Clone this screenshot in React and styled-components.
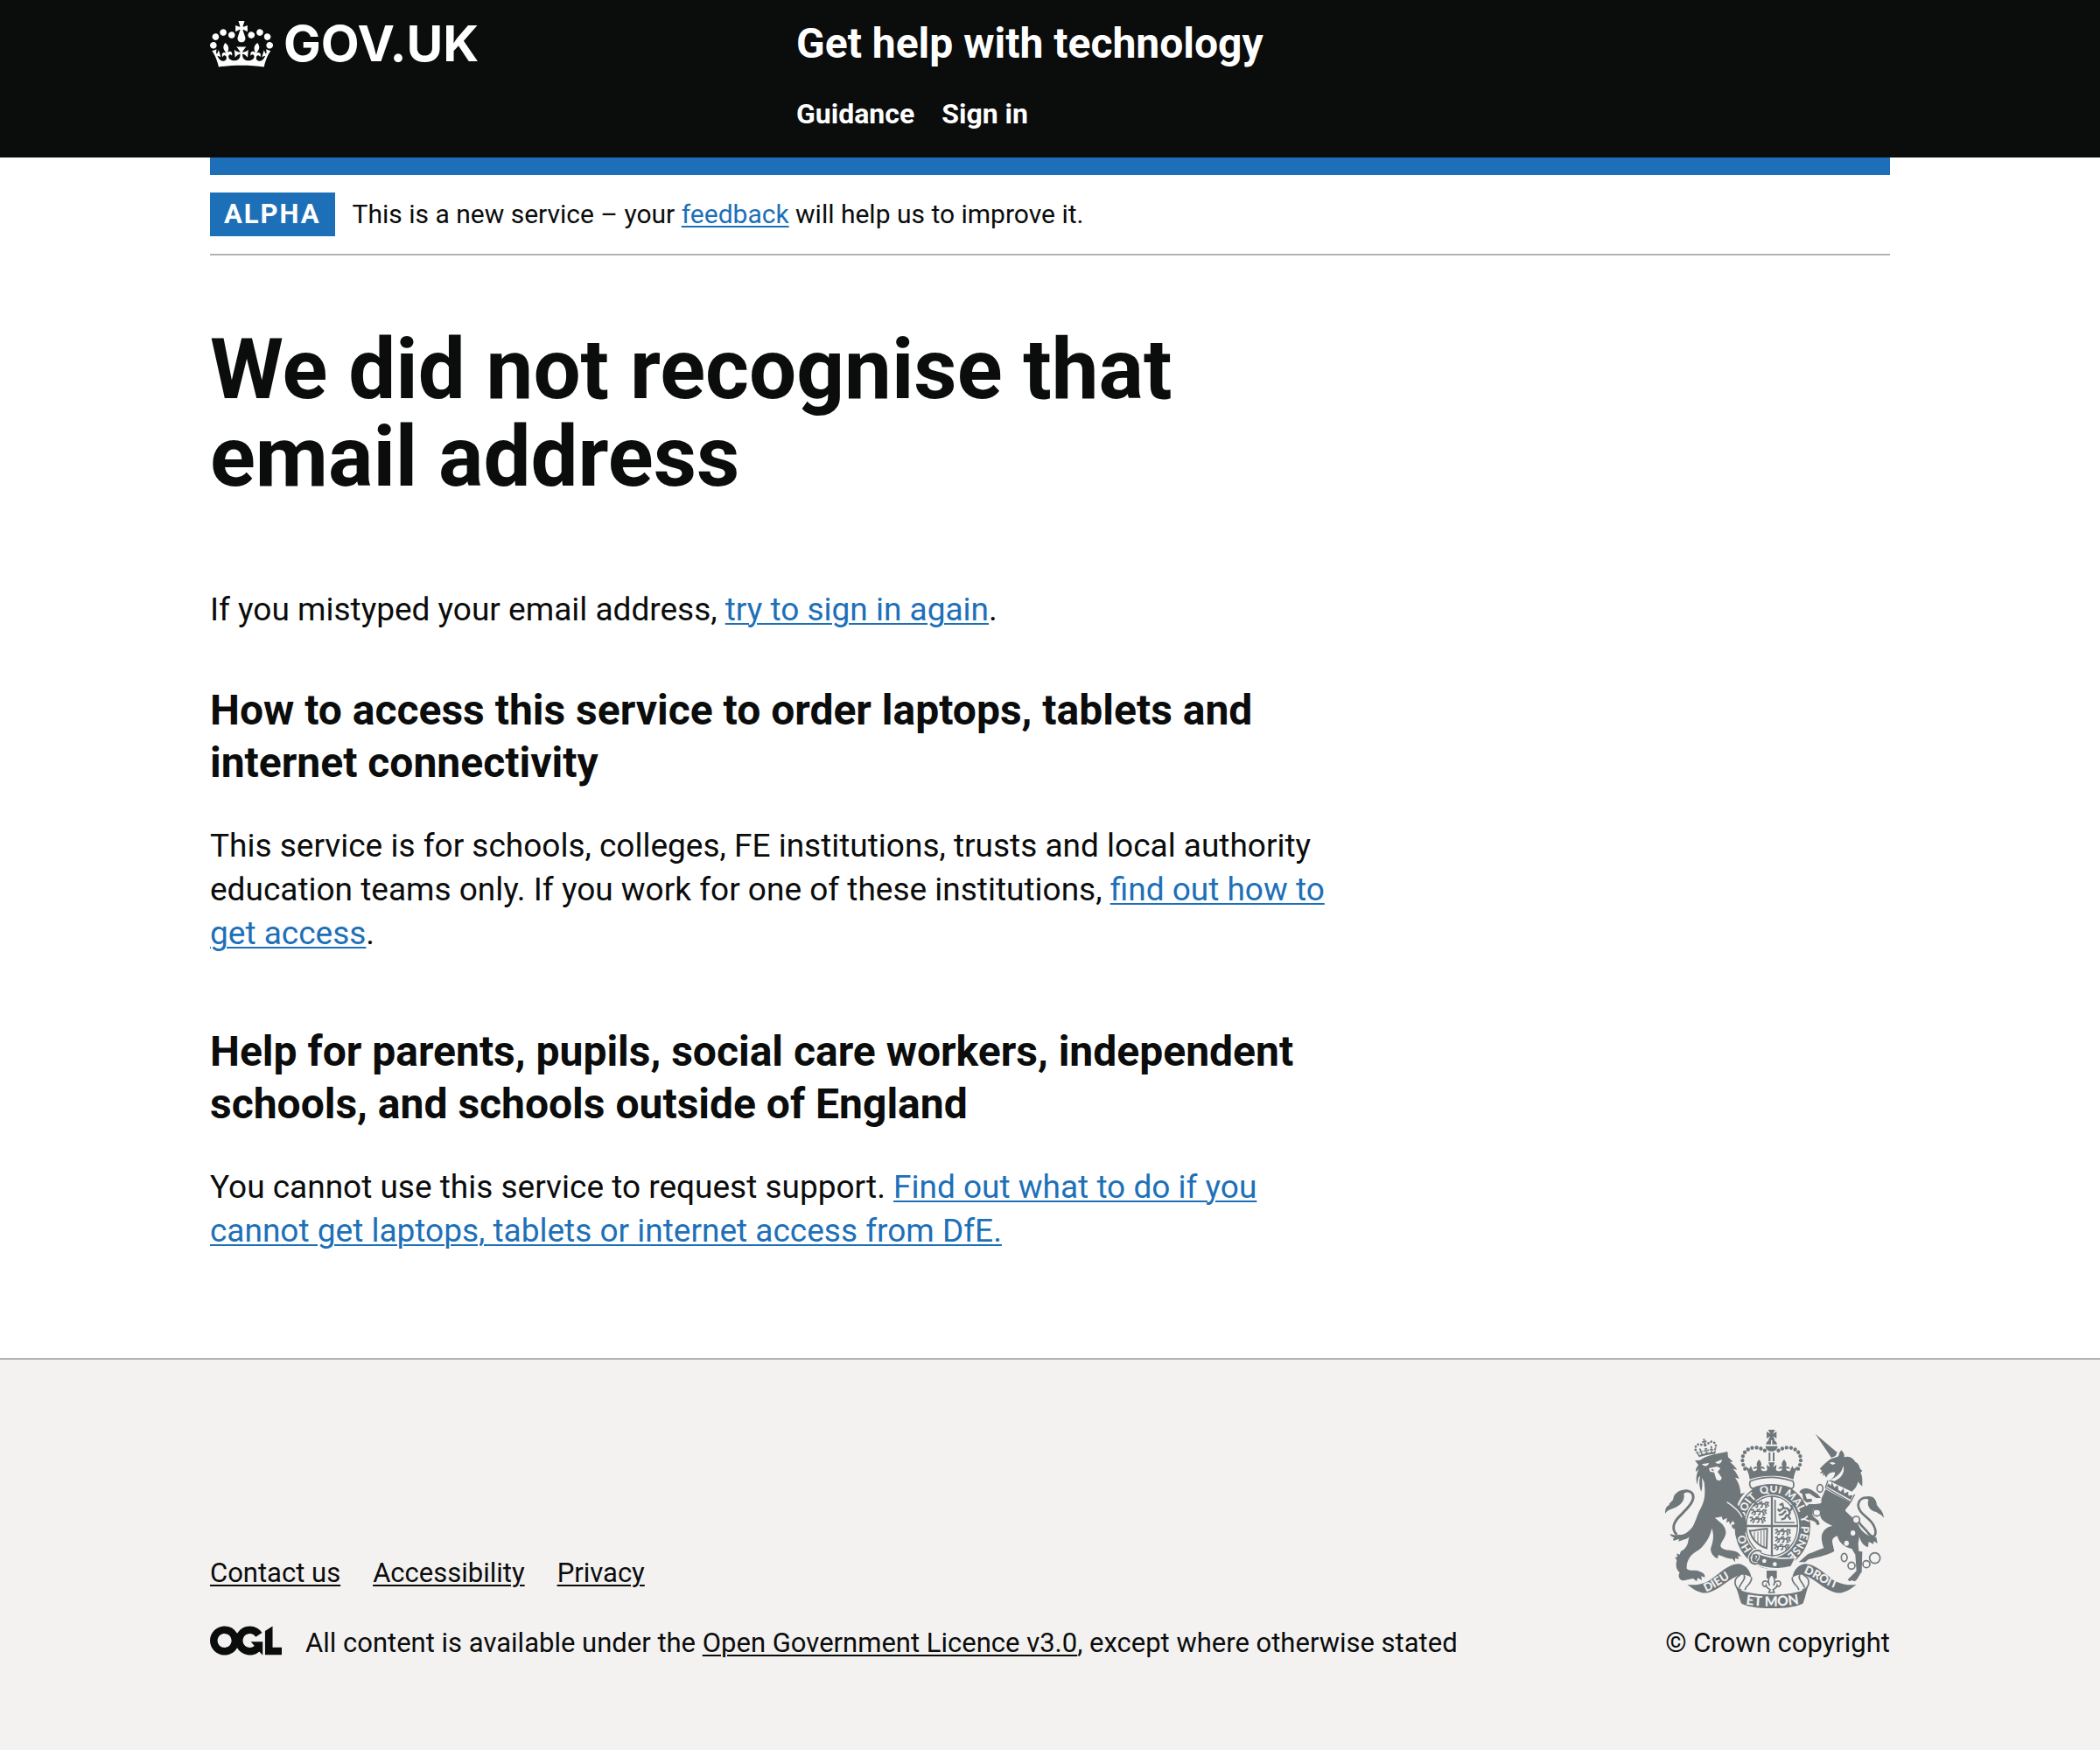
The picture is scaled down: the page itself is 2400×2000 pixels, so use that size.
import React from "react";
import styled, { createGlobalStyle } from "styled-components";

const ink = "#0b0c0c";
const blue = "#1d70b8";
const rule = "#b1b4b6";
const pale = "#f3f2f1";
const stone = "#6f777b";

const GlobalStyle = createGlobalStyle`
  html {
    background: ${pale};
  }
  body {
    margin: 0;
    background: #fff;
    color: ${ink};
    font-family: Roboto, "Liberation Sans", sans-serif;
  }
  *, *::before, *::after {
    box-sizing: border-box;
  }
`;

const Container = styled.div`
  width: calc(100% - 120px);
  max-width: 1920px;
  margin: 0 auto;
`;

const Header = styled.header`
  background: ${ink};
  color: #fff;
`;

const HeaderGrid = styled(Container)`
  display: grid;
  grid-template-columns: 1fr 2fr;
  column-gap: 45px;
  align-items: start;
  padding: 20px 0 30px;
`;

const HeaderLink = styled.a`
  color: #fff;
  text-decoration: none;
`;

const LogoLink = styled(HeaderLink)`
  display: inline-flex;
  align-items: center;
  gap: 12px;
  font: bold 57px/60px Inter, "Liberation Sans", sans-serif;
`;

const CrownIcon = styled.svg`
  display: block;
  width: 72px;
  height: 53px;
  fill: currentColor;
`;

const ServiceName = styled(HeaderLink)`
  display: inline-block;
  font-size: 48px;
  line-height: 60px;
  font-weight: 700;
`;

const NavList = styled.ul`
  display: flex;
  gap: 31px;
  margin: 30px 0 0;
  padding: 0;
  list-style: none;
  font-size: 32px;
  line-height: 40px;
  font-weight: 700;
`;

const BlueBar = styled(Container)`
  height: 20px;
  background: ${blue};
`;

const PhaseBanner = styled(Container)`
  display: flex;
  gap: 20px;
  padding: 20px 0;
  border-bottom: 2px solid ${rule};
  font-size: 30px;
  line-height: 50px;
`;

const Tag = styled.strong`
  padding: 0 16px;
  background: ${blue};
  color: #fff;
  font-size: 31px;
  letter-spacing: 2px;
`;

const Link = styled.a`
  color: ${(p) => (p.$plain ? ink : blue)};
  text-decoration: underline;
  text-decoration-thickness: 2px;
  text-underline-offset: 3px;
`;

const Main = styled(Container).attrs({ as: "main" })`
  display: grid;
  grid-template-columns: 2fr 1fr;
  padding: 80px 0 120px;
`;

const Title = styled.h1`
  margin: 0 0 100px;
  font-size: 96px;
  line-height: 100px;
  font-weight: 700;
`;

const Subtitle = styled.h2`
  margin: ${(p) => p.$gap}px 0 40px;
  font-size: 48px;
  line-height: 60px;
  font-weight: 700;
`;

const Text = styled.p`
  margin: 0;
  font-size: 37px;
  line-height: 50px;
`;

const Footer = styled.footer`
  border-top: 2px solid ${rule};
  background: ${pale};
  font-size: 31px;
  line-height: 40px;
`;

const FooterRow = styled(Container)`
  display: flex;
  align-items: flex-end;
  justify-content: space-between;
  gap: 60px;
  padding: 80px 0 50px;
`;

const FooterLinks = styled.ul`
  display: flex;
  gap: 37px;
  margin: 0 0 40px;
  padding: 0;
  list-style: none;
`;

const Licence = styled.div`
  display: flex;
  align-items: flex-start;
  gap: 27px;
`;

const OglIcon = styled.svg`
  display: block;
  flex: none;
  width: 82px;
  height: 34px;
  fill: ${ink};
`;

const Copyright = styled(Link)`
  display: flex;
  flex-direction: column;
  align-items: flex-start;
  gap: 20px;
  white-space: nowrap;
  text-decoration: none;
`;

const ArmsIcon = styled.svg`
  display: block;
  width: 250px;
  height: 204px;
`;

const crownPath =
  "M25 30.2c3.5 1.5 7.7-.2 9.1-3.7 1.5-3.6-.2-7.8-3.9-9.2-3.6-1.4-7.6.3-9.1 3.9-1.4 3.5.3 7.5 3.9 9zM9 39.5c3.6 1.5 7.8-.2 9.2-3.7 1.5-3.6-.2-7.8-3.9-9.1-3.6-1.5-7.6.2-9.1 3.8-1.4 3.5.3 7.5 3.8 9zM4.4 57.2c3.5 1.5 7.7-.2 9.1-3.8 1.5-3.6-.2-7.7-3.9-9.1-3.5-1.5-7.6.3-9.1 3.8-1.4 3.5.3 7.6 3.9 9.1zm38.3-21.4c3.5 1.5 7.7-.2 9.1-3.8 1.5-3.6-.2-7.7-3.9-9.1-3.6-1.5-7.6.3-9.1 3.8-1.3 3.6.4 7.7 3.9 9.1zm64.4-5.6c-3.6 1.5-7.8-.2-9.1-3.7-1.5-3.6.2-7.8 3.8-9.2 3.6-1.4 7.7.3 9.2 3.9 1.3 3.5-.4 7.5-3.9 9zm15.9 9.3c-3.6 1.5-7.7-.2-9.1-3.7-1.5-3.6.2-7.8 3.7-9.1 3.6-1.5 7.7.2 9.2 3.8 1.5 3.5-.3 7.5-3.8 9zm4.7 17.7c-3.6 1.5-7.8-.2-9.2-3.8-1.5-3.6.2-7.7 3.9-9.1 3.6-1.5 7.7.3 9.2 3.8 1.3 3.5-.4 7.6-3.9 9.1zM89.3 35.8c-3.6 1.5-7.8-.2-9.2-3.8-1.4-3.6.2-7.7 3.9-9.1 3.6-1.5 7.7.3 9.2 3.8 1.4 3.6-.3 7.7-3.9 9.1zM69.7 17.7l8.9 4.7V9.3l-8.9 2.8c-.2-.3-.5-.6-.9-.9L72.4 0H59.6l3.5 11.2c-.3.3-.6.5-.9.9l-8.8-2.8v13.1l8.8-4.7c.3.3.6.7.9.9l-5 15.4v.1c-.2.8-.4 1.6-.4 2.4 0 4.1 3.1 7.5 7 8.1h.2c.3 0 .7.1 1 .1.4 0 .7 0 1-.1h.2c4-.6 7.1-4.1 7.1-8.1 0-.8-.1-1.7-.4-2.4V34l-5.1-15.4c.4-.2.7-.6 1-.9zM66 92.8c16.9 0 32.8 1.1 47.1 3.2 4-16.9 8.9-26.7 14-33.5l-9.6-3.4c1 4.9 1.1 7.2 0 10.2-1.5-1.4-3-4.3-4.2-8.7L108.6 76c2.8-2 5-3.2 7.5-3.3-4.4 9.4-10 11.9-13.6 11.2-4.3-.8-6.3-4.6-5.6-7.9 1-4.7 5.7-5.9 8-.5 4.3-8.7-3-11.4-7.6-8.8 7.1-7.2 7.9-13.5 2.1-21.1-8 6.1-8.1 12.3-4.5 20.8-4.7-5.4-12.1-2.5-9.5 6.2 3.4-5.2 7.9-2 7.2 3.1-.6 4.3-6.4 7.8-13.5 7.2-10.3-.9-10.9-8-11.2-13.8 2.5-.5 7.1 1.8 11 7.3L80.2 60c-4.1 4.4-8 5.3-12.3 5.4 1.4-4.4 8-11.6 8-11.6H55.5s6.4 7.2 7.9 11.6c-4.2-.1-8-1-12.3-5.4l1.4 16.4c3.9-5.5 8.5-7.7 10.9-7.3-.3 5.8-.9 12.8-11.1 13.8-7.2.6-12.9-2.9-13.5-7.2-.7-5 3.8-8.3 7.1-3.1 2.7-8.7-4.6-11.6-9.4-6.2 3.7-8.5 3.6-14.7-4.6-20.8-5.8 7.6-5 13.9 2.2 21.1-4.7-2.6-11.9.1-7.7 8.8 2.3-5.5 7.1-4.2 8.1.5.7 3.3-1.3 7.1-5.7 7.9-3.5.7-9-1.8-13.5-11.2 2.5.1 4.7 1.3 7.5 3.3l-4.7-15.4c-1.2 4.4-2.7 7.2-4.3 8.7-1.1-3-.9-5.3 0-10.2l-9.5 3.4c5 6.9 9.9 16.7 14 33.5 14.8-2.1 30.8-3.2 47.7-3.2z";

const Lion = () => (
  <g>
    <path d={crownPath} transform="translate(166 112) rotate(-12) scale(.6)" />
    {/* tail */}
    <path
      d="M112 432 C92 412 102 388 122 368 C146 344 172 320 168 298 C165 282 148 278 130 286"
      fill="none" stroke={stone} strokeWidth="9"
    />
    <path d="M152 279 C128 274 104 286 100 308 C98 318 84 322 86 330 C74 336 72 346 72 360 C82 344 92 346 108 338 C134 326 140 306 136 292 Z" />
    <path d="M176 392 C156 420 140 434 118 432 C104 436 96 430 88 430 C92 438 98 440 104 442 C98 446 98 450 102 452 C110 450 114 448 120 446 L118 456 C132 448 148 448 156 438 Z" />
    {/* head, mane and body */}
    <path d="M174 178 L192 176 C208 164 230 158 252 154 L286 147 L288 166 C294 172 300 176 304 182 L294 182 C304 190 312 198 319 209 L304 206 C314 214 320 226 326 240 L312 236 C324 252 330 270 331 292 L346 288 C334 298 328 310 320 328 L344 366 C352 388 354 404 350 420 L344 430 L338 418 L332 430 L324 418 L314 424 L316 410 C306 416 300 408 300 398 L312 396 L304 384 L294 398 L292 386 L282 390 L284 374 L270 382 L266 370 L242 374 C262 390 282 402 280 428 C276 448 262 456 262 472 C270 486 286 484 298 486 C312 488 326 490 332 508 L322 504 L324 516 L312 512 L312 526 L302 514 C284 516 266 502 254 502 L252 514 C238 508 228 496 228 480 C238 452 240 432 232 410 C226 440 206 474 178 490 C158 502 144 522 146 548 C158 560 176 550 190 558 C202 562 210 568 208 578 L196 574 L198 588 L184 580 L180 592 L168 582 L140 588 C126 592 112 578 122 562 C108 550 108 534 112 520 L106 510 L114 508 L112 496 L122 500 L126 488 C136 486 146 474 150 460 C156 420 176 388 184 362 C198 330 214 318 206 252 L198 236 C200 256 200 270 196 284 C188 266 188 250 192 230 L186 236 C184 250 182 252 184 262 C174 244 180 220 188 206 L178 216 C174 206 184 198 186 192 Z" />
    <g fill={pale}>
      <path d="M198 190 L222 186 C220 198 206 200 198 190Z" />
      <path d="M244 184 L266 174 C268 186 254 194 244 184Z" />
      <path d="M222 204 L250 198 L262 204 L252 216 L266 236 C266 248 248 250 246 238 L240 218 L226 216Z" />
    </g>
    <path d="M228 210 l8 -4 l4 8 z" />
    <path d="M284 320 C306 334 326 350 336 372" fill="none" stroke={pale} strokeWidth="4" />
  </g>
);

const Unicorn = () => (
  <g>
    <path d="M587 86 L662 150 L656 162 L642 168 Z" />
    <path d="M602 206 C616 190 628 180 640 172 L664 164 L668 158 C668 150 674 146 676 142 C684 150 688 158 686 166 C704 160 716 168 724 182 C736 186 738 200 742 208 L748 212 L742 220 C750 234 748 250 748 266 C740 260 736 254 734 250 C730 264 724 276 712 284 L632 246 C648 240 656 226 654 218 C640 216 630 222 624 236 L618 226 L612 230 L614 220 L602 222 L610 212 Z" />
    <path d="M636 186 C644 180 652 184 656 188 L646 192 Z M634 244 C664 236 682 212 682 194 C692 220 672 240 652 248Z" fill={pale} />
    {/* crown collar */}
    <path d="M630 246 L622 270 L708 320 L722 294" fill="none" stroke={stone} strokeWidth="4" />
    <path d="M632 256 L640 264 L644 252 L652 270 L664 262 L666 278 L674 284 L684 272 L686 290 L700 284 L700 298 L716 296 L708 312 L626 266 Z" />
    {/* body and legs */}
    <path d="M622 276 L708 322 C702 336 690 342 690 350 C706 366 720 376 730 394 C742 416 738 440 734 462 L736 488 L748 490 L746 560 C738 566 736 582 722 592 L712 588 L704 592 L698 586 L728 556 L724 500 L712 480 C688 476 668 460 662 436 C650 440 642 448 646 462 L652 488 C630 502 590 510 564 516 L552 526 L530 526 L548 510 L562 498 C586 490 602 482 616 478 C610 460 606 444 610 430 C616 414 632 402 646 402 C626 392 602 380 604 364 C610 342 606 320 608 308 Z" />
    <path d="M612 322 C594 330 580 326 566 326 L550 340 L556 360 L568 380 L586 388 L594 400 L602 396 L598 384 C590 376 580 372 576 362 L580 344 L608 350 Z" />
    <path d="M532 286 C540 272 556 270 574 278 L594 292 L606 306 L590 306 L566 290 L552 292 L558 310 L574 308 L576 318 L558 322 L546 312 L542 292 Z" />
    {/* tail */}
    <path
      d="M728 372 C734 396 756 408 770 428 C790 452 800 428 788 402 C776 372 734 362 734 330 C736 308 756 300 772 308"
      fill="none" stroke={stone} strokeWidth="8"
    />
    <path d="M764 300 C790 298 796 314 798 330 C808 346 820 350 822 374 C812 360 804 362 796 354 C772 350 762 330 770 310Z" />
    <path d="M728 380 C738 412 752 430 784 440 L796 440 L800 462 L788 454 L786 464 L770 456 L768 474 C750 470 742 452 738 440Z" />
    {/* chain */}
    <g fill="none" stroke={stone} strokeWidth="5">
      <ellipse cx="603" cy="273" rx="10" ry="13" />
      <ellipse cx="592" cy="356" rx="13" ry="12" />
      <ellipse cx="686" cy="510" rx="10" ry="14" />
      <ellipse cx="711" cy="538" rx="12" ry="12" />
      <ellipse cx="762" cy="533" rx="12" ry="12" />
      <circle cx="791" cy="512" r="18" />
    </g>
    <circle cx="727" cy="381" r="12" fill={pale} stroke={stone} strokeWidth="5" />
    <g fill={pale}>
      <ellipse cx="716" cy="426" rx="8" ry="9" />
      <ellipse cx="694" cy="461" rx="8" ry="9" />
    </g>
  </g>
);

const StateCrown = () => (
  <g>
    <path d="M425 72 H449 L441 86 L454 78 V102 L441 94 L449 107 H425 L433 94 L420 102 V78 L433 86 Z" />
    <path d="M418 122 C420 112 428 106 437 106 C446 106 454 112 456 122 Z M416 128 H458 C456 140 448 146 437 146 C426 146 418 140 416 128Z" />
    <path d="M437 108 V124" stroke={pale} strokeWidth="4" />
    <path d="M430 150 V180 M444 150 V180" stroke={stone} strokeWidth="6" />
    <g fill="none" stroke={stone} strokeWidth="13" strokeLinecap="round" strokeDasharray="0 15">
      <path d="M346 206 C328 176 336 134 382 133 C400 134 410 140 420 148" />
      <path d="M528 206 C546 176 538 134 492 133 C474 134 464 140 454 148" />
    </g>
    <path d="M346 196 L360 206 L366 196 L374 214 C380 214 386 212 388 206 C382 202 378 208 374 206 C376 198 384 196 389 200 C382 190 388 180 394 174 C400 180 406 190 399 200 C404 196 412 198 414 206 C410 208 406 202 400 206 C404 216 416 216 422 210 L420 192 L432 200 L426 184 H448 L442 200 L454 192 L452 210 C458 216 470 216 474 206 C468 202 464 208 460 206 C462 198 470 196 475 200 C468 190 474 180 480 174 C486 180 492 190 485 200 C490 196 498 198 500 206 C496 208 492 202 486 206 C490 214 494 214 500 214 L508 196 L514 206 L528 196 C520 210 514 226 512 242 C470 226 404 226 362 242 C360 226 354 210 346 196 Z" />
    <path d="M364 248 C410 232 464 232 510 248 C516 262 512 272 506 274 C464 256 410 256 372 274 C362 270 360 258 364 248 Z" fill={pale} stroke={stone} strokeWidth="5" />
  </g>
);

const WalkingLion = ({ x, y }) => (
  <g transform={`translate(${x} ${y})`}>
    <path
      d="M2 4 L10 2 L12 9 L26 7 L42 8 L46 2 L54 4 L50 10 L56 16 M12 9 L4 16 M18 9 L16 18 L10 20 M34 9 L32 18 L26 20 M42 9 L48 19 L42 21 M22 3 L34 1"
      fill="none" stroke={stone} strokeWidth="5"
    />
  </g>
);

const Garter = () => (
  <g>
    <ellipse cx="440" cy="402" rx="136" ry="154" fill={pale} />
    <ellipse cx="440" cy="402" rx="130" ry="148" />
    <ellipse cx="438" cy="402" rx="94" ry="108" fill={pale} />
    <ellipse cx="438" cy="402" rx="88" ry="102" fill="none" stroke={stone} strokeWidth="4" />
    <path d="M438 298 V506 M348 402 H528" stroke={stone} strokeWidth="7" />
    <WalkingLion x={372} y={318} />
    <WalkingLion x={364} y={344} />
    <WalkingLion x={360} y={370} />
    <WalkingLion x={446} y={412} />
    <WalkingLion x={446} y={438} />
    <WalkingLion x={442} y={464} />
    {/* rampant lion in its bordered quarter */}
    <path d="M449 312 V390 H516" fill="none" stroke={stone} strokeWidth="5" />
    <path d="M464 330 L474 326 L478 340 L492 342 L500 356 L494 368 L502 380 M478 340 L464 350 L458 344 M486 350 L474 362 L462 364 M490 362 L482 376 L470 380 M500 350 L508 340 L504 330" fill="none" stroke={stone} strokeWidth="7" />
    {/* harp */}
    <path d="M362 418 C384 420 402 410 422 412 L420 478 C396 472 370 452 362 418 Z" fill="none" stroke={stone} strokeWidth="6" />
    <path d="M378 422 V448 M390 422 V460 M401 418 V468 M411 416 V474" stroke={stone} strokeWidth="3" />
    <defs>
      <path id="garter" d="M440 516 A99 115 0 0 1 341 401 A99 114 0 0 1 440 287 A99 114 0 0 1 539 401 A99 115 0 0 1 440 516" />
    </defs>
    <g fill={pale} fontFamily="Lato, sans-serif" fontWeight="900" fontSize="37">
      <text><textPath href="#garter" startOffset="12%">HO</textPath></text>
      <text><textPath href="#garter" startOffset="29%">SOIT</textPath></text>
      <text><textPath href="#garter" startOffset="44%">QUI</textPath></text>
      <text><textPath href="#garter" startOffset="56%">MAL</textPath></text>
      <text><textPath href="#garter" startOffset="70%">Y</textPath></text>
      <text><textPath href="#garter" startOffset="75%">PENSE</textPath></text>
    </g>
    {/* buckle and strap end */}
    <path d="M372 486 C410 508 460 518 520 510 L504 542 C450 556 400 546 366 524 Z" stroke={pale} strokeWidth="5" />
    <path d="M402 490 C384 480 364 492 362 512 C362 528 376 536 390 530 M378 502 C390 496 396 508 384 518" fill="none" stroke={pale} strokeWidth="12" />
    <path d="M402 490 C384 480 364 492 362 512 C362 528 376 536 390 530 M378 502 C390 496 396 508 384 518" fill="none" stroke={stone} strokeWidth="6" />
    <g fill={pale}>
      <circle cx="412" cy="522" r="7" />
      <circle cx="448" cy="533" r="7" />
    </g>
  </g>
);

const RibbonHalf = () => (
  <g>
    <path d="M148 603 C180 606 204 602 228 586 C262 562 292 530 326 532 C350 536 364 556 368 580 C356 568 336 566 318 574 C284 590 262 616 228 628 C200 640 172 622 148 603 Z" />
    <path d="M330 570 C306 580 304 612 334 622 M368 578 C372 600 346 606 346 622 M342 570 C352 584 330 596 326 614" fill="none" stroke={stone} strokeWidth="5" />
  </g>
);

const Scroll = () => (
  <g>
    <RibbonHalf />
    <g transform="translate(876 0) scale(-1 1)">
      <RibbonHalf />
    </g>
    <path d="M314 612 C350 646 526 646 562 612 C554 630 552 654 544 668 C500 690 376 690 334 668 C326 654 324 630 314 612 Z" />
    <defs>
      <path id="dieu" d="M212 628 C246 616 276 588 326 564" />
      <path id="mon" d="M340 669 C400 680 476 680 540 667" />
      <path id="droit" d="M546 562 C590 578 620 612 700 628" />
    </defs>
    <g fill={pale} fontFamily="Lato, sans-serif" fontWeight="900" fontSize="40">
      <text><textPath href="#dieu">DIEU</textPath></text>
      <text fontSize="47" textAnchor="middle"><textPath href="#mon" startOffset="50%">ET MON</textPath></text>
      <text><textPath href="#droit">DROIT</textPath></text>
    </g>
    {/* fleur-de-lis */}
    <path d="M420 555 H455 V582 H420 Z" />
    <path
      d="M437 566 C450 582 450 592 444 606 C446 590 468 584 468 600 C468 610 458 612 456 606 C454 616 444 618 442 620 L446 630 H428 L432 620 C430 618 420 616 418 606 C416 612 406 610 406 600 C406 584 428 590 430 606 C424 592 424 582 437 566 Z"
      fill={pale} stroke={stone} strokeWidth="5"
    />
  </g>
);

const RoyalArms = () => (
  <ArmsIcon viewBox="72 72 750 612" fill={stone} aria-hidden="true">
    <Garter />
    <StateCrown />
    <Unicorn />
    <Lion />
    <Scroll />
  </ArmsIcon>
);

export default function App() {
  return (
    <>
      <GlobalStyle />
      <Header>
        <HeaderGrid>
          <div>
            <LogoLink href="#home">
              <CrownIcon viewBox="0 0 132 97" aria-hidden="true">
                <path fillRule="evenodd" d={crownPath} />
              </CrownIcon>
              <span>GOV.UK</span>
            </LogoLink>
          </div>
          <div>
            <ServiceName href="#service">Get help with technology</ServiceName>
            <nav>
              <NavList>
                <li><HeaderLink href="#guidance">Guidance</HeaderLink></li>
                <li><HeaderLink href="#sign-in">Sign in</HeaderLink></li>
              </NavList>
            </nav>
          </div>
        </HeaderGrid>
      </Header>
      <BlueBar />
      <PhaseBanner>
        <Tag>ALPHA</Tag>
        <span>
          This is a new service – your <Link href="#feedback">feedback</Link> will help us to improve it.
        </span>
      </PhaseBanner>
      <Main>
        <div>
          <Title>We did not recognise that email address</Title>
          <Text>
            If you mistyped your email address, <Link href="#sign-in">try to sign in again</Link>.
          </Text>
          <Subtitle $gap={60}>
            How to access this service to order laptops, tablets and internet connectivity
          </Subtitle>
          <Text>
            This service is for schools, colleges, FE institutions, trusts and local authority
            education teams only. If you work for one of these institutions,{" "}
            <Link href="#access">find out how to get access</Link>.
          </Text>
          <Subtitle $gap={80}>
            Help for parents, pupils, social care workers, independent schools, and schools outside
            of England
          </Subtitle>
          <Text>
            You cannot use this service to request support.{" "}
            <Link href="#support">
              Find out what to do if you cannot get laptops, tablets or internet access from DfE.
            </Link>
          </Text>
        </div>
      </Main>
      <Footer>
        <FooterRow>
          <div>
            <FooterLinks>
              <li><Link $plain href="#contact">Contact us</Link></li>
              <li><Link $plain href="#accessibility">Accessibility</Link></li>
              <li><Link $plain href="#privacy">Privacy</Link></li>
            </FooterLinks>
            <Licence>
              <OglIcon viewBox="0 0 483.2 195.7" aria-hidden="true">
                <path d="M421.5 142.8V.1l-50.7 32.3v161.1h112.4v-50.7zm-122.3-9.6A47.12 47.12 0 0 1 221 97.8c0-26 21.1-47.1 47.1-47.1 16.7 0 31.4 8.7 39.7 21.8l42.7-27.2A97.63 97.63 0 0 0 268.1 0c-36.5 0-68.3 20.1-85.1 49.7A98 98 0 0 0 97.8 0C43.9 0 0 43.9 0 97.8s43.9 97.8 97.8 97.8c36.5 0 68.3-20.1 85.1-49.7a97.76 97.76 0 0 0 149.6 25.4l19.4 22.2h3v-87.8h-80l24.3 27.5zM97.8 145c-26 0-47.1-21.1-47.1-47.1s21.1-47.1 47.1-47.1 47.1 21.1 47.1 47.1S123.8 145 97.8 145" />
              </OglIcon>
              <span>
                All content is available under the{" "}
                <Link $plain href="#licence">Open Government Licence v3.0</Link>, except where
                otherwise stated
              </span>
            </Licence>
          </div>
          <Copyright $plain href="#copyright">
            <RoyalArms />
            <span>© Crown copyright</span>
          </Copyright>
        </FooterRow>
      </Footer>
    </>
  );
}
